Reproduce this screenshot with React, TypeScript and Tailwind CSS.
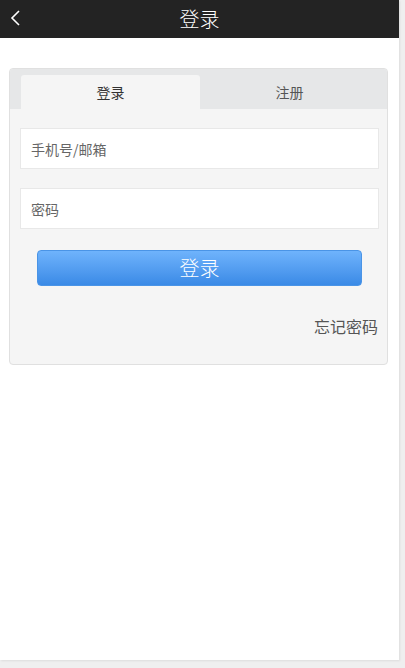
export default function App() {
  return (
    <div
      className="min-h-[668px] w-[405px] bg-[#efefef]"
      style={{ fontFamily: '"Microsoft YaHei", "Noto Sans CJK SC", "Noto Sans", sans-serif' }}
    >
      <div className="h-[660px] w-[399px] bg-white shadow-[1px_1px_2px_rgba(0,0,0,0.08)]">
        {/* header */}
        <header className="relative flex h-[38px] items-center justify-center bg-[#232323]">
          <button className="absolute left-[9px] top-[9px] text-white" aria-label="back">
            <svg width="14" height="18" viewBox="0 0 14 18" fill="none">
              <path d="M10 2 L3 9 L10 16" stroke="white" strokeWidth="1.6" />
            </svg>
          </button>
          <h1 className="text-[20px] font-light leading-none text-white">登录</h1>
        </header>

        {/* card */}
        <div className="ml-[9px] mr-[11px] mt-[30px] overflow-hidden rounded-[4px] border border-[#e0e0e0] bg-[#f5f5f5]">
          <div className="flex h-[40px] items-end bg-[#e6e7e8] pl-[11px] pr-[8px]">
            <div className="flex h-[34px] flex-1 items-center justify-center rounded-t-[3px] bg-[#f5f5f5] text-[14px] text-[#333]">
              登录
            </div>
            <div className="flex h-[34px] flex-1 items-center justify-center text-[14px] text-[#555]">
              注册
            </div>
          </div>

          <div className="pb-[28px] pl-[10px] pr-[8px] pt-[19px]">
            <input
              className="block h-[41px] w-full border border-[#e8e8e8] bg-white px-[10px] text-[14px] text-[#333] outline-none placeholder:text-[#666]"
              placeholder="手机号/邮箱"
            />
            <input
              type="password"
              className="mt-[19px] block h-[41px] w-full border border-[#e8e8e8] bg-white px-[10px] text-[14px] text-[#333] outline-none placeholder:text-[#666]"
              placeholder="密码"
            />
            <div className="px-[17px] pt-[21px]">
              <button className="flex h-[36px] w-full items-center justify-center rounded-[4px] border border-[#4a94e6] bg-gradient-to-b from-[#6fb3fc] to-[#3a8ae6] text-[20px] font-light text-white">
                登录
              </button>
            </div>
            <div className="mt-[30px] flex justify-end pr-px">
              <a className="text-[16px] leading-[20px] text-[#555]">忘记密码</a>
            </div>
          </div>
        </div>
      </div>
    </div>
  );
}
